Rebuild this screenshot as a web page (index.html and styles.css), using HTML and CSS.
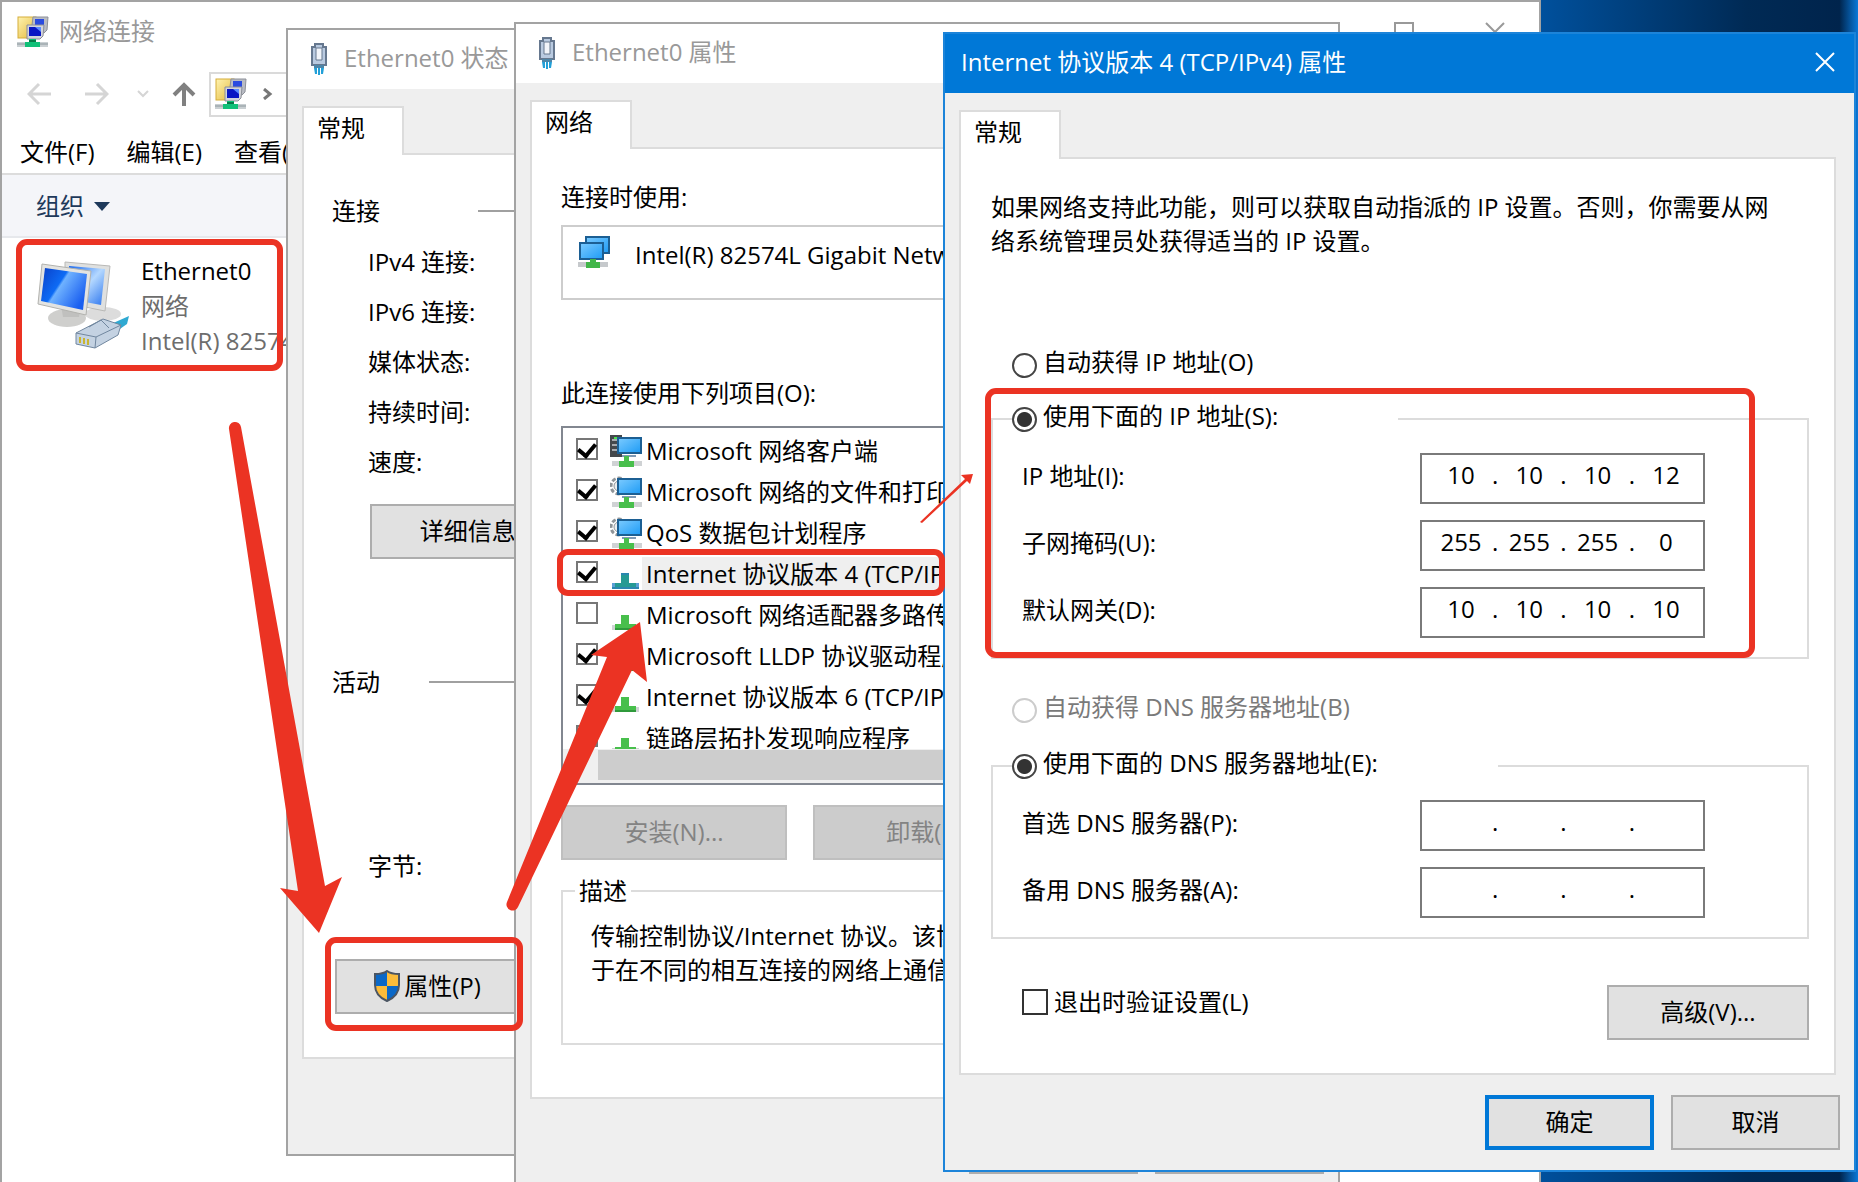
FILE: index.html
```html
<!DOCTYPE html>
<html lang="zh-CN">
  <head>
    <meta charset="UTF-8" />
    <meta name="viewport" content="width=device-width, initial-scale=1.0" />
    <title>网络连接</title>
    <link rel="stylesheet" href="styles.css">
  </head>

  <body>
    <!-- shared icons -->
    <svg class="sprite" aria-hidden="true">
      <defs>
        <linearGradient id="screen" x1="0" y1="0" x2="1" y2="1">
          <stop offset="0" stop-color="#7ccbff" />
          <stop offset="1" stop-color="#1d9bf5" />
        </linearGradient>
        <linearGradient id="glass" x1="0" y1="0" x2="1" y2="0.6">
          <stop offset="0" stop-color="#0a3fc8" />
          <stop offset="0.45" stop-color="#0d6bf5" />
          <stop offset="0.5" stop-color="#6fb2ff" />
          <stop offset="1" stop-color="#1a5ff0" />
        </linearGradient>
        <linearGradient id="glass-back" x1="0" y1="0" x2="1" y2="1">
          <stop offset="0" stop-color="#1667f0" />
          <stop offset="0.5" stop-color="#b4d8ff" />
          <stop offset="1" stop-color="#2a74ee" />
        </linearGradient>
        <linearGradient id="folder" x1="0" y1="0" x2="1" y2="1">
          <stop offset="0" stop-color="#fff3b0" />
          <stop offset="1" stop-color="#e3b93c" />
        </linearGradient>
      </defs>
      <symbol id="icon-folder-net" viewBox="0 0 32 32">
        <rect x="1" y="1" width="18" height="21" fill="url(#folder)" stroke="#d5ad3a" />
        <path d="M16 1h15l-1 13-3 3H14z" fill="#b9bcc4" stroke="#8d9098" />
        <path d="M18 3h9v9h-9z" fill="#2a4be0" />
        <path d="M10 9h17l-1 11-3 3H10z" fill="#d3d5db" stroke="#8d9098" />
        <path d="M12 11h12v9H12z" fill="#0a17c4" />
        <path d="M18 11h6v5z" fill="#5b8bff" />
        <path d="M0 26h31v5H0z" fill="#c9cfd2" />
        <path d="M0 28h31" stroke="#8b979c" />
        <path d="M12 23h7v3h4v5H8v-5h4z" fill="#10c078" />
        <path d="M12 24h7v2h-7z" fill="#067a47" />
      </symbol>
      <symbol id="icon-plug" viewBox="0 0 18 32">
        <path d="M5 1h8v3h3v18H2V4h3z" fill="#b9cae0" stroke="#66788f" stroke-width="2" />
        <path d="M6 5h6v12H6z" fill="#f2f5fa" stroke="#66788f" />
        <path d="M4 22h10v3H4z" fill="#4d86a8" />
        <path d="M4 25h3v6H5zM8 25h2v7H8zM11 25h3l-1 6h-2z" fill="#23a0d8" />
      </symbol>
      <symbol id="icon-adapter" viewBox="0 0 32 32">
        <path d="M8 1h23v16H8z" fill="url(#screen)" stroke="#1c5f93" stroke-width="2" />
        <path d="M2 7h23v16H2z" fill="url(#screen)" stroke="#1c5f93" stroke-width="2" />
        <path d="M0 26h30v5H0z" fill="#c6c9cc" />
        <path d="M12 23h6v3h4v6H8v-6h4z" fill="#41b649" />
      </symbol>
      <symbol id="icon-client" viewBox="0 0 32 32">
        <path d="M0 0h12v22H0z" fill="#44484c" />
        <path d="M2 5h8M2 10h6M2 15h6" stroke="#a7abb0" stroke-width="2" />
        <path d="M4 2h3v2H4z" fill="#4be04f" />
        <path d="M8 3h23v15H8z" fill="url(#screen)" stroke="#1c5f93" stroke-width="2" />
        <path d="M12 21h14" stroke="#7f9ab5" stroke-width="2" />
        <path d="M2 26h30v5H2z" fill="#cfd2d4" />
        <path d="M14 21h5v5h5v6H9v-6h5z" fill="#48bf4c" />
      </symbol>
      <symbol id="icon-service" viewBox="0 0 32 32">
        <circle cx="9" cy="10" r="8" fill="none" stroke="#8f9498" stroke-width="3" stroke-dasharray="4 2" />
        <circle cx="9" cy="10" r="5" fill="#eceeef" stroke="#8f9498" />
        <path d="M8 3h23v15H8z" fill="url(#screen)" stroke="#1c5f93" stroke-width="2" />
        <path d="M12 21h14" stroke="#7f9ab5" stroke-width="2" />
        <path d="M2 26h30v5H2z" fill="#cfd2d4" />
        <path d="M14 21h5v5h5v6H9v-6h5z" fill="#48bf4c" />
      </symbol>
      <symbol id="icon-protocol" viewBox="0 0 32 32">
        <path d="M2 26h27v5H2z" fill="#d0d3d5" />
        <path d="M11 16h8v9h7v6H5v-6h6z" fill="#48bf4c" />
        <path d="M5 30h21" stroke="#2f9a3b" stroke-width="2" />
      </symbol>
      <symbol id="icon-protocol-selected" viewBox="0 0 32 32">
        <path d="M2 25h27v6H2z" fill="#5b9fd6" />
        <path d="M11 16h8v9h7v6H5v-6h6z" fill="#259a94" />
        <path d="M11 16h8M2 30h27" stroke="#2b87b0" stroke-width="2" />
      </symbol>
      <symbol id="icon-shield" viewBox="0 0 28 32">
        <path d="M14 1c4 3 8 3 12 3v11c0 8-5 13-12 16C7 28 2 23 2 15V4c4 0 8 0 12-3z" fill="#0a68c7" />
        <path d="M14 1c4 3 8 3 12 3v12H14zM2 16h12v15C7 28 2 23 2 16z" fill="#fbbc3a" />
        <path d="M14 1c4 3 8 3 12 3v11c0 8-5 13-12 16C7 28 2 23 2 15V4c4 0 8 0 12-3z" fill="none" stroke="#4c5663" stroke-width="2" />
      </symbol>
    </svg>

    <main class="desktop">
      <!-- 网络连接 -->
      <section class="window explorer">
        <header class="titlebar">
          <svg class="icon"><use href="#icon-folder-net" /></svg>
          <h1 class="title">网络连接</h1>
          <button class="caption-btn" aria-label="最大化">
            <svg viewBox="0 0 20 20"><path d="M1 1h18v18H1z" /></svg>
          </button>
          <button class="caption-btn" aria-label="关闭">
            <svg viewBox="0 0 20 20"><path d="M1 1l18 18M19 1L1 19" /></svg>
          </button>
        </header>
        <nav class="navbar">
          <button class="nav-btn" aria-label="后退" disabled>
            <svg viewBox="0 0 24 24"><path d="M24 12H2M12 2L2 12l10 10" /></svg>
          </button>
          <button class="nav-btn" aria-label="前进" disabled>
            <svg viewBox="0 0 24 24"><path d="M0 12h22M12 2l10 10-10 10" /></svg>
          </button>
          <button class="nav-btn small" aria-label="最近" disabled>
            <svg viewBox="0 0 12 12"><path d="M1 3l5 5 5-5" /></svg>
          </button>
          <button class="nav-btn up" aria-label="上移">
            <svg viewBox="0 0 24 24"><path d="M12 24V3M2 13L12 3l10 10" /></svg>
          </button>
          <div class="address">
            <svg class="icon"><use href="#icon-folder-net" /></svg>
            <svg class="crumb" viewBox="0 0 12 12"><path d="M3 1l6 5-6 5" /></svg>
          </div>
        </nav>
        <div class="menubar">
          <button>文件(F)</button>
          <button>编辑(E)</button>
          <button>查看(V)</button>
        </div>
        <div class="toolbar">
          <button>组织 <span class="caret"></span></button>
        </div>
        <div class="connection">
          <svg class="connection-icon" viewBox="0 0 94 90">
            <ellipse cx="66" cy="53" rx="18" ry="7" fill="#dcdcdc" />
            <path d="M28 1l45 4-5 45-40-8z" fill="#dfe0df" stroke="#b9b9b7" />
            <path d="M32 5l36 3-4 36-32-6z" fill="url(#glass-back)" />
            <ellipse cx="30" cy="57" rx="19" ry="9" fill="#cfcfcd" />
            <path d="M24 44h20l-2 12H26z" fill="#c0c0be" />
            <path d="M5 3l49 7-5 44L1 43z" fill="#e3e3e1" stroke="#b2b2ae" />
            <path d="M8 7l42 6-4 36L4 40z" fill="url(#glass)" />
            <path d="M74 63l18-8-2 8-10 7z" fill="#2fa9d2" />
            <path d="M39 72l27-14 18 6-3 10-23 13-19-4z" fill="#c4d2e2" stroke="#71879f" />
            <path d="M39 72l20 4 25-12M59 76l-1 11M52 66l12-7 8 8" fill="none" stroke="#71879f" />
            <path d="M43 76v6M47 77v6M51 78v6" stroke="#c9b531" stroke-width="2" />
          </svg>
          <div class="connection-text">
            <div>Ethernet0</div>
            <div class="muted">网络</div>
            <div class="muted">Intel(R) 82574L Gigabit</div>
          </div>
        </div>
      </section>

      <!-- Ethernet0 状态 -->
      <section class="window status">
        <header class="titlebar">
          <svg class="icon plug"><use href="#icon-plug" /></svg>
          <h2 class="title">Ethernet0 状态</h2>
        </header>
        <div class="dialog-body">
          <button class="tab">常规</button>
          <div class="panel">
            <h3 class="heading connect">连接</h3>
            <ul class="facts">
              <li>IPv4 连接:</li>
              <li>IPv6 连接:</li>
              <li>媒体状态:</li>
              <li>持续时间:</li>
              <li>速度:</li>
            </ul>
            <button class="btn details">详细信息(E)...</button>
            <h3 class="heading activity">活动</h3>
            <div class="bytes">字节:</div>
            <button class="btn props-btn">
              <svg class="shield"><use href="#icon-shield" /></svg>属性(P)
            </button>
          </div>
        </div>
      </section>

      <!-- Ethernet0 属性 -->
      <section class="window props">
        <header class="titlebar">
          <svg class="icon plug"><use href="#icon-plug" /></svg>
          <h2 class="title">Ethernet0 属性</h2>
        </header>
        <div class="dialog-body">
          <button class="tab">网络</button>
          <div class="panel">
            <div>连接时使用:</div>
            <div class="adapter">
              <svg class="icon"><use href="#icon-adapter" /></svg>
              <span>Intel(R) 82574L Gigabit Network Connection</span>
            </div>
            <div>此连接使用下列项目(O):</div>
            <div class="list">
              <div class="list-rows">
                <label class="item">
                  <input type="checkbox" checked><svg class="icon"><use href="#icon-client" /></svg>
                  <span>Microsoft 网络客户端</span>
                </label>
                <label class="item">
                  <input type="checkbox" checked><svg class="icon"><use href="#icon-service" /></svg>
                  <span>Microsoft 网络的文件和打印机共享</span>
                </label>
                <label class="item">
                  <input type="checkbox" checked><svg class="icon"><use href="#icon-service" /></svg>
                  <span>QoS 数据包计划程序</span>
                </label>
                <label class="item selected">
                  <input type="checkbox" checked><svg class="icon"><use href="#icon-protocol-selected" /></svg>
                  <span>Internet 协议版本 4 (TCP/IPv4)</span>
                </label>
                <label class="item">
                  <input type="checkbox"><svg class="icon"><use href="#icon-protocol" /></svg>
                  <span>Microsoft 网络适配器多路传送器协议</span>
                </label>
                <label class="item">
                  <input type="checkbox" checked><svg class="icon"><use href="#icon-protocol" /></svg>
                  <span>Microsoft LLDP 协议驱动程序</span>
                </label>
                <label class="item">
                  <input type="checkbox" checked><svg class="icon"><use href="#icon-protocol" /></svg>
                  <span>Internet 协议版本 6 (TCP/IPv6)</span>
                </label>
                <label class="item">
                  <input type="checkbox" checked><svg class="icon"><use href="#icon-protocol" /></svg>
                  <span>链路层拓扑发现响应程序</span>
                </label>
              </div>
              <div class="scrollbar"><div class="thumb"></div></div>
            </div>
            <div class="btn-row">
              <button class="btn" disabled>安装(N)...</button>
              <button class="btn" disabled>卸载(U)</button>
              <button class="btn">属性(R)</button>
            </div>
            <fieldset class="group description">
              <legend>描述</legend>
              <p>传输控制协议/Internet 协议。该协议是默认的广域网络协议，用<br>于在不同的相互连接的网络上通信。</p>
            </fieldset>
          </div>
          <div class="footer">
            <button class="btn">确定</button>
            <button class="btn">取消</button>
          </div>
        </div>
      </section>

      <!-- IPv4 属性 -->
      <form class="window ipv4">
        <header class="titlebar">
          <h2 class="title">Internet 协议版本 4 (TCP/IPv4) 属性</h2>
          <button type="button" class="caption-btn" aria-label="关闭">
            <svg viewBox="0 0 20 20"><path d="M1 1l18 18M19 1L1 19" /></svg>
          </button>
        </header>
        <div class="dialog-body">
          <button type="button" class="tab">常规</button>
          <div class="panel">
            <p class="intro">如果网络支持此功能，则可以获取自动指派的 IP 设置。否则，你需要从网络系统管理员处获得适当的 IP 设置。</p>

            <label class="radio auto-ip"><input type="radio" name="ip"><span>自动获得 IP 地址(O)</span></label>
            <fieldset class="group">
              <legend><label class="radio"><input type="radio" name="ip" checked><span>使用下面的 IP 地址(S):</span></label></legend>
              <div class="field">
                <label for="ip-1">IP 地址(I):</label>
                <div class="ip-box">
                  <input id="ip-1" value="10">.<input aria-label="IP 2" value="10">.<input aria-label="IP 3" value="10">.<input aria-label="IP 4" value="12">
                </div>
              </div>
              <div class="field">
                <label for="mask-1">子网掩码(U):</label>
                <div class="ip-box">
                  <input id="mask-1" value="255">.<input aria-label="掩码 2" value="255">.<input aria-label="掩码 3" value="255">.<input aria-label="掩码 4" value="0">
                </div>
              </div>
              <div class="field">
                <label for="gw-1">默认网关(D):</label>
                <div class="ip-box">
                  <input id="gw-1" value="10">.<input aria-label="网关 2" value="10">.<input aria-label="网关 3" value="10">.<input aria-label="网关 4" value="10">
                </div>
              </div>
            </fieldset>

            <label class="radio auto-dns"><input type="radio" name="dns" disabled><span>自动获得 DNS 服务器地址(B)</span></label>
            <fieldset class="group">
              <legend><label class="radio"><input type="radio" name="dns" checked><span>使用下面的 DNS 服务器地址(E):</span></label></legend>
              <div class="field">
                <label for="dns-1">首选 DNS 服务器(P):</label>
                <div class="ip-box">
                  <input id="dns-1">.<input aria-label="首选 2">.<input aria-label="首选 3">.<input aria-label="首选 4">
                </div>
              </div>
              <div class="field">
                <label for="alt-1">备用 DNS 服务器(A):</label>
                <div class="ip-box">
                  <input id="alt-1">.<input aria-label="备用 2">.<input aria-label="备用 3">.<input aria-label="备用 4">
                </div>
              </div>
            </fieldset>

            <div class="validate">
              <label><input type="checkbox">退出时验证设置(L)</label>
              <button type="button" class="btn advanced">高级(V)...</button>
            </div>
          </div>
          <div class="footer">
            <button type="button" class="btn primary">确定</button>
            <button type="button" class="btn">取消</button>
          </div>
        </div>
      </form>

      <!-- step marks over the windows -->
      <svg class="marks" width="1858" height="1182" viewBox="0 0 1858 1182" aria-hidden="true">
        <g class="mark-box">
          <rect x="19" y="242" width="261" height="126" rx="8" />
          <rect x="328" y="940" width="192" height="88" rx="8" />
          <rect x="560" y="552" width="382" height="41" rx="8" />
          <rect x="988" y="391" width="764" height="264" rx="8" />
        </g>
        <g class="mark-arrow">
          <path d="M229 429a6 6 0 0 1 12-2L325 886l17-9-23 56-39-45 18 3z" />
          <path d="M507 902a6 6 0 0 0 11 5L632 670l15 12-7-60-49 33 16 2z" />
          <path d="M920 522L965 479l-4-4 12-1-3 10-3-3-45 42z" />
        </g>
      </svg>
    </main>
  </body>
</html>
```
FILE: styles.css
```css
* {
  box-sizing: border-box;
}

body {
  margin: 0;
  font-family: "Open Sans", "Noto Sans CJK SC", sans-serif;
  font-size: 24px;
  line-height: 34px;
  color: #000;
}

h1, h2, h3, p, ul {
  margin: 0;
  padding: 0;
  font-size: 24px;
  font-weight: normal;
  list-style: none;
}

button, input {
  font: inherit;
  color: inherit;
  margin: 0;
  padding: 0;
  border: none;
  background: none;
}

.sprite {
  position: absolute;
  width: 0;
  height: 0;
}

.desktop {
  position: relative;
  min-height: 100vh;
  overflow: hidden;
  background: linear-gradient(to right, #00509c 83%, #002a55 94%, #00244c 99%, #0a78d8 100%);
}

/* windows */
.window {
  position: absolute;
  border: 2px solid #a3a3a3;
  background-color: #efefef;
  white-space: nowrap;
  overflow: hidden;
}

.titlebar {
  display: flex;
  align-items: center;
  height: 59px;
  background-color: #fff;
  color: #999;
}

.title {
  flex: 1;
  padding-bottom: 4px;
}

.icon {
  width: 32px;
  height: 32px;
  flex: none;
}

.plug {
  width: 18px;
  margin: 0 16px 2px 22px;
}

.caption-btn {
  display: flex;
  width: 20px;
}

.caption-btn svg {
  width: 20px;
  height: 20px;
  fill: none;
  stroke: currentColor;
  stroke-width: 2;
}

.dialog-body {
  padding: 17px 14px;
}

.tab {
  display: block;
  position: relative;
  z-index: 1;
  width: 102px;
  height: 49px;
  margin-bottom: -2px;
  padding: 0 0 8px 13px;
  text-align: left;
  background-color: #fff;
  border: 2px solid #dcdcdc;
  border-bottom: none;
}

.panel {
  background-color: #fff;
  border: 2px solid #dcdcdc;
}

.btn {
  height: 55px;
  padding-bottom: 2px;
  background-color: #e1e1e1;
  border: 2px solid #adadad;
  flex: none;
}

.btn:disabled {
  background-color: #ccc;
  border-color: #bfbfbf;
  color: #838383;
}

.btn.primary {
  border: 4px solid #0078d7;
}

.footer {
  display: flex;
  justify-content: flex-end;
  gap: 17px;
  margin-top: 20px;
}

.footer .btn {
  width: 169px;
}

.group {
  margin: 0;
  padding: 0;
  border: 2px solid #dcdcdc;
}

/* explorer */
.explorer {
  left: 0;
  right: 317px;
  top: 0;
  bottom: -2px;
  background-color: #fff;
}

.explorer .titlebar {
  padding: 0 34px 0 15px;
}

.explorer .title {
  padding-bottom: 2px;
}

.explorer .icon {
  margin-right: 10px;
}

.explorer .caption-btn {
  margin-left: 71px;
}

.navbar {
  display: flex;
  align-items: center;
  height: 66px;
  padding-left: 25px;
}

.nav-btn {
  display: flex;
  margin-right: 28px;
  color: #808080;
}

.nav-btn:first-child {
  margin-right: 34px;
}

.nav-btn:disabled {
  color: #d5d5d5;
}

.nav-btn svg, .crumb {
  width: 24px;
  height: 24px;
  fill: none;
  stroke: currentColor;
  stroke-width: 3;
}

.nav-btn.small {
  margin-right: 23px;
}

.nav-btn.small svg, .crumb {
  width: 12px;
  height: 12px;
  stroke-width: 2;
}

.nav-btn.up {
  margin-right: 13px;
}

.nav-btn.up svg {
  stroke-width: 4;
}

.address {
  display: flex;
  align-items: center;
  flex: 1;
  height: 45px;
  padding-left: 4px;
  border: 2px solid #dadada;
  color: #777;
}

.address .icon {
  margin-right: 14px;
}

.address .crumb {
  stroke-width: 3;
}

.menubar {
  display: flex;
  gap: 32px;
  height: 46px;
  padding: 8px 0 4px 18px;
}

.toolbar {
  height: 65px;
  padding: 14px 34px;
  color: #1e395b;
  background-color: #f4f5f9;
  border-top: 2px solid #dcdcdc;
  border-bottom: 2px solid #e6e8ec;
}

.caret {
  display: inline-block;
  margin: 0 0 4px 4px;
  border: 8px solid transparent;
  border-top: 9px solid #1e395b;
  border-bottom-width: 0;
  vertical-align: middle;
}

.connection {
  display: flex;
  gap: 10px;
  padding: 15px 0 0 35px;
}

.connection-icon {
  width: 94px;
  height: 90px;
  margin-top: 8px;
}

.connection-text {
  line-height: 35px;
}

.muted {
  color: #6d6d6d;
}

/* Ethernet0 status */
.status {
  left: 286px;
  top: 28px;
  width: 480px;
}

.status .dialog-body {
  padding-bottom: 95px;
}

.status .panel {
  padding: 39px 28px 43px;
}

.heading {
  display: flex;
  align-items: center;
  gap: 98px;
}

.heading::after {
  content: "";
  flex: 1;
  height: 2px;
  background-color: #a0a0a0;
}

.heading.activity {
  gap: 49px;
  margin-top: 106px;
}

.facts {
  margin-top: 9px;
  padding-left: 36px;
  line-height: 50px;
}

.bytes {
  margin: 150px 0 76px;
  padding-left: 36px;
}

.details {
  width: 242px;
  margin: 17px 0 0 38px;
}

.props-btn {
  display: flex;
  align-items: center;
  justify-content: center;
  gap: 3px;
  width: 184px;
  margin-left: 3px;
}

.shield {
  width: 28px;
  height: 32px;
}

/* Ethernet0 properties */
.props {
  left: 514px;
  top: 22px;
  width: 826px;
}

.props .panel {
  padding: 31px 28px 52px 29px;
}

.adapter {
  display: flex;
  gap: 25px;
  height: 75px;
  margin: 11px 0 76px;
  padding: 9px 15px;
  border: 2px solid #cdcdcd;
}

.adapter span {
  padding-top: 2px;
}

.list {
  margin: 16px 0 20px;
  border: 2px solid #828790;
}

.list-rows {
  height: 321px;
  padding-top: 2px;
  overflow: hidden;
}

.item {
  display: flex;
  align-items: center;
  height: 41px;
  padding-left: 13px;
}

input[type="checkbox"] {
  appearance: none;
  display: grid;
  place-items: center;
  width: 22px;
  height: 22px;
  flex: none;
  border: 2px solid #777;
}

.item input {
  margin-bottom: 4px;
}

input[type="checkbox"]:checked::after {
  content: "";
  width: 8px;
  height: 13px;
  margin-bottom: 4px;
  border: solid #000;
  border-width: 0 4px 4px 0;
  transform: rotate(40deg);
}

.item .icon {
  margin-left: 12px;
}

.item span {
  flex: 1;
  padding-left: 4px;
}

.selected span {
  background-color: #efefef;
}

.scrollbar {
  height: 34px;
  padding: 1px 0 3px 35px;
  background-color: #f0f0f0;
}

.thumb {
  height: 30px;
  background-color: #cdcdcd;
}

.btn-row {
  display: flex;
  gap: 26px;
}

.btn-row .btn {
  width: 226px;
}

.description {
  height: 171px;
  margin-top: 14px;
  padding: 11px 28px;
}

.description legend {
  margin-left: -16px;
  padding: 0 4px;
}

/* TCP/IPv4 properties */
.ipv4 {
  left: 943px;
  right: 2px;
  top: 32px;
  border-color: #1c84d9;
}

.ipv4 .titlebar {
  padding: 0 19px 0 16px;
  background-color: #0078d7;
  color: #fff;
}

.ipv4 .caption-btn {
  margin-bottom: 4px;
}

.ipv4 .dialog-body {
  padding: 17px 14px 20px;
}

.ipv4 .panel {
  margin-right: 4px;
  padding: 31px 25px 33px 30px;
}

.intro {
  margin: 0 26px 90px 0;
  white-space: normal;
}

.radio {
  display: flex;
  align-items: center;
  gap: 6px;
}

.radio span, .field label {
  padding-bottom: 6px;
}

.radio span {
  line-height: 28px;
}

.radio input {
  appearance: none;
  width: 25px;
  height: 25px;
  margin: 5px 0 4px;
  border: 2px solid #444;
  border-radius: 50%;
}

.radio input:checked {
  background: radial-gradient(circle, #333 7px, transparent 8px);
}

.radio:has(:disabled) {
  color: #7a7a7a;
}

.radio input:disabled {
  border-color: #ccc;
}

.auto-ip, .auto-dns {
  padding-left: 21px;
}

.auto-ip {
  margin-bottom: 20px;
}

.auto-dns {
  margin: 34px 0 22px;
}

.ipv4 .group {
  display: flex;
  flex-direction: column;
  gap: 16px;
  padding: 17px 102px 19px 29px;
}

.ipv4 legend {
  margin-left: -10px;
  padding: 0 120px 0 0;
}

.field {
  display: flex;
  justify-content: space-between;
  align-items: center;
}

.ip-box {
  display: flex;
  align-items: center;
  width: 285px;
  height: 51px;
  padding: 0 0 8px 8px;
  border: 2px solid #7a7a7a;
}

.ip-box input {
  width: 62px;
  flex: none;
  text-align: center;
}

.validate {
  display: flex;
  justify-content: space-between;
  align-items: flex-start;
  margin-top: 46px;
}

.validate label {
  display: flex;
  align-items: center;
  gap: 6px;
  padding-left: 31px;
}

.validate input[type="checkbox"] {
  width: 26px;
  height: 26px;
  border-color: #333;
}

.advanced {
  width: 202px;
}

/* marks */
.marks {
  position: absolute;
  left: 0;
  top: 0;
  pointer-events: none;
}

.mark-box {
  fill: none;
  stroke: #eb3323;
  stroke-width: 6;
}

.mark-arrow {
  fill: #eb3323;
}
```
